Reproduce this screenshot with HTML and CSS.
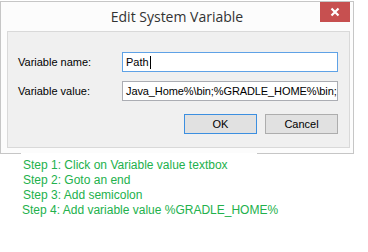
FILE: index.html
```html
<!DOCTYPE html>
<html>
<head>
<meta charset="utf-8">
<link rel="stylesheet" href="styles.css">
</head>
<body>
<div class="top"></div>
<div class="window">
  <div class="titlebar">
    <span class="title">Edit System Variable</span>
    <div class="close">
      <svg width="10" height="10" viewBox="0 0 10 10"><path d="M1.5 1.5 L8.5 8.5 M8.5 1.5 L1.5 8.5" stroke="#fff" stroke-width="2.2" fill="none"/></svg>
    </div>
  </div>
  <div class="panel">
    <div class="row">
      <span class="label">Variable name:</span>
      <div class="field focus"><span>Path</span><span class="caret"></span></div>
    </div>
    <div class="row">
      <span class="label">Variable value:</span>
      <div class="field"><span class="typed">Java_Home%\bin;</span><span class="pasted">%GRADLE_HOME%\bin;</span></div>
    </div>
    <div class="buttons">
      <div class="btn default">OK</div>
      <div class="btn">Cancel</div>
    </div>
  </div>
</div>
<div class="note">
  <div class="step">Step 1: Click on Variable value textbox</div>
  <div class="step">Step 2: Goto an end</div>
  <div class="step">Step 3: Add semicolon</div>
  <div class="step s4">Step 4: Add variable value %GRADLE_HOME%</div>
</div>
</body>
</html>
```
FILE: styles.css
```css
html, body {
  margin: 0;
  padding: 0;
  background: #ffffff;
}
body {
  width: 368px;
  height: 252px;
  overflow: hidden;
  position: relative;
  font-family: "Liberation Sans", Arial, sans-serif;
}
.top {
  height: 1px;
}
.window {
  width: 352px;
  height: 151px;
  border: 1px solid #c6c6c6;
  background: #fcfcfc;
  position: relative;
}
.titlebar {
  height: 29px;
  display: flex;
  align-items: center;
  justify-content: center;
}
.title {
  font-family: "Open Sans", "Noto Sans", sans-serif;
  font-size: 14px;
  color: #333;
}
.close {
  position: absolute;
  top: 0;
  right: 3px;
  width: 30px;
  height: 20px;
  background: #c75050;
  display: flex;
  align-items: center;
  justify-content: center;
}
.close svg { display: block; }
.panel {
  margin: 0 3px 0 6px;
  border: 1px solid #d9d9d9;
  background: #f0f0f0;
  padding: 20px 11px 0 10px;
  box-sizing: border-box;
  height: 117px;
  display: flex;
  flex-direction: column;
  font-size: 11px;
  color: #000;
}
.row {
  display: flex;
  align-items: center;
  height: 20px;
  margin-bottom: 9px;
}
.label {
  width: 104px;
}
.field {
  width: 216px;
  height: 20px;
  box-sizing: border-box;
  border: 1px solid #abadb3;
  background: #fff;
  display: flex;
  align-items: center;
  padding-left: 3px;
  white-space: nowrap;
  overflow: hidden;
}
.field.focus {
  border-color: #5fa2e6;
}
.caret {
  width: 1px;
  height: 13px;
  background: #000;
  margin-left: 1px;
}
.typed {
  letter-spacing: -0.1px;
}
.pasted {
  font-size: 11px;
  letter-spacing: -0.1px;
}
.buttons {
  display: flex;
  justify-content: flex-end;
  gap: 8px;
  margin-top: 4px;
}
.btn {
  width: 73px;
  height: 20px;
  box-sizing: border-box;
  border: 1px solid #adadad;
  background: #e1e1e1;
  display: flex;
  align-items: center;
  justify-content: center;
}
.btn.default {
  border-color: #3c8fe0;
}
.note {
  position: absolute;
  left: 21px;
  top: 153px;
  width: 236px;
  height: 99px;
  background: #fff;
  padding-top: 5px;
  box-sizing: border-box;
  font-family: "Liberation Sans", Arial, sans-serif;
  font-size: 12px;
  line-height: 15px;
  color: #22b14c;
  white-space: nowrap;
}
.step {
  padding-left: 2px;
}
.step.s4 {
  padding-left: 1px;
}
```
